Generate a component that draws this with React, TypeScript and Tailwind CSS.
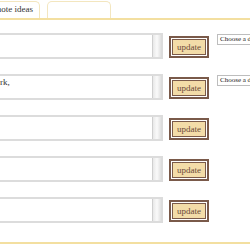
import React from "react";

const rows = ["", "rk,", "", "", ""];

function UpdateButton() {
  return (
    <div className="mt-[3px] ml-[6px] border-2 border-[#7a5a4a] bg-white p-px">
      <button className="flex h-[16px] w-[34px] items-center justify-center border border-[#7a5a4a] bg-[#f3dca8] font-['Liberation_Serif',serif] text-[9px] leading-none text-[#6b4a3a]">
        update
      </button>
    </div>
  );
}

function Row({ text, select }: { text: string; select: boolean }) {
  return (
    <div className="flex h-[41px] items-start">
      <div className="flex h-[26px] w-[163px] shrink-0 border-2 border-l-0 border-[#dcdcdc] bg-white">
        <div className="flex-1 pt-[2px] font-['Liberation_Serif',serif] text-[9px] leading-none text-[#333]">
          {text}
        </div>
        <div className="w-[9px] border-l border-[#cfcfcf] bg-gradient-to-r from-[#e8e8e8] via-[#fafafa] to-[#e0e0e0]" />
      </div>
      <UpdateButton />
      {select && (
        <div className="ml-[8px] mt-px h-[11px] w-[70px] shrink-0 whitespace-nowrap border border-[#bdbdbd] bg-white pl-[2px] font-['Liberation_Serif',serif] text-[7px] leading-[9px] text-[#222]">
          Choose a direction
        </div>
      )}
    </div>
  );
}

export default function App() {
  return (
    <div className="h-[250px] w-[250px] overflow-hidden bg-white">
      <div className="flex h-[20px] items-end gap-[7px] border-b-2 border-[#f3dfa0] pt-[3px]">
        <div className="flex h-[17px] w-[40px] shrink-0 items-center justify-end rounded-tr-[5px] border border-b-0 border-l-0 border-[#f3e6bf] pr-[6px] font-['Liberation_Serif',serif] text-[9px] text-[#333]">
          <span className="whitespace-nowrap">note ideas</span>
        </div>
        <div className="h-[17px] w-[64px] shrink-0 rounded-t-[5px] border border-b-0 border-[#f3e6bf]" />
      </div>
      <div className="pt-[13px]">
        {rows.map((t, i) => (
          <Row key={i} text={t} select={i < 2} />
        ))}
      </div>
      <div className="mt-[4px] border-b-2 border-[#f3dfa0]" />
    </div>
  );
}
